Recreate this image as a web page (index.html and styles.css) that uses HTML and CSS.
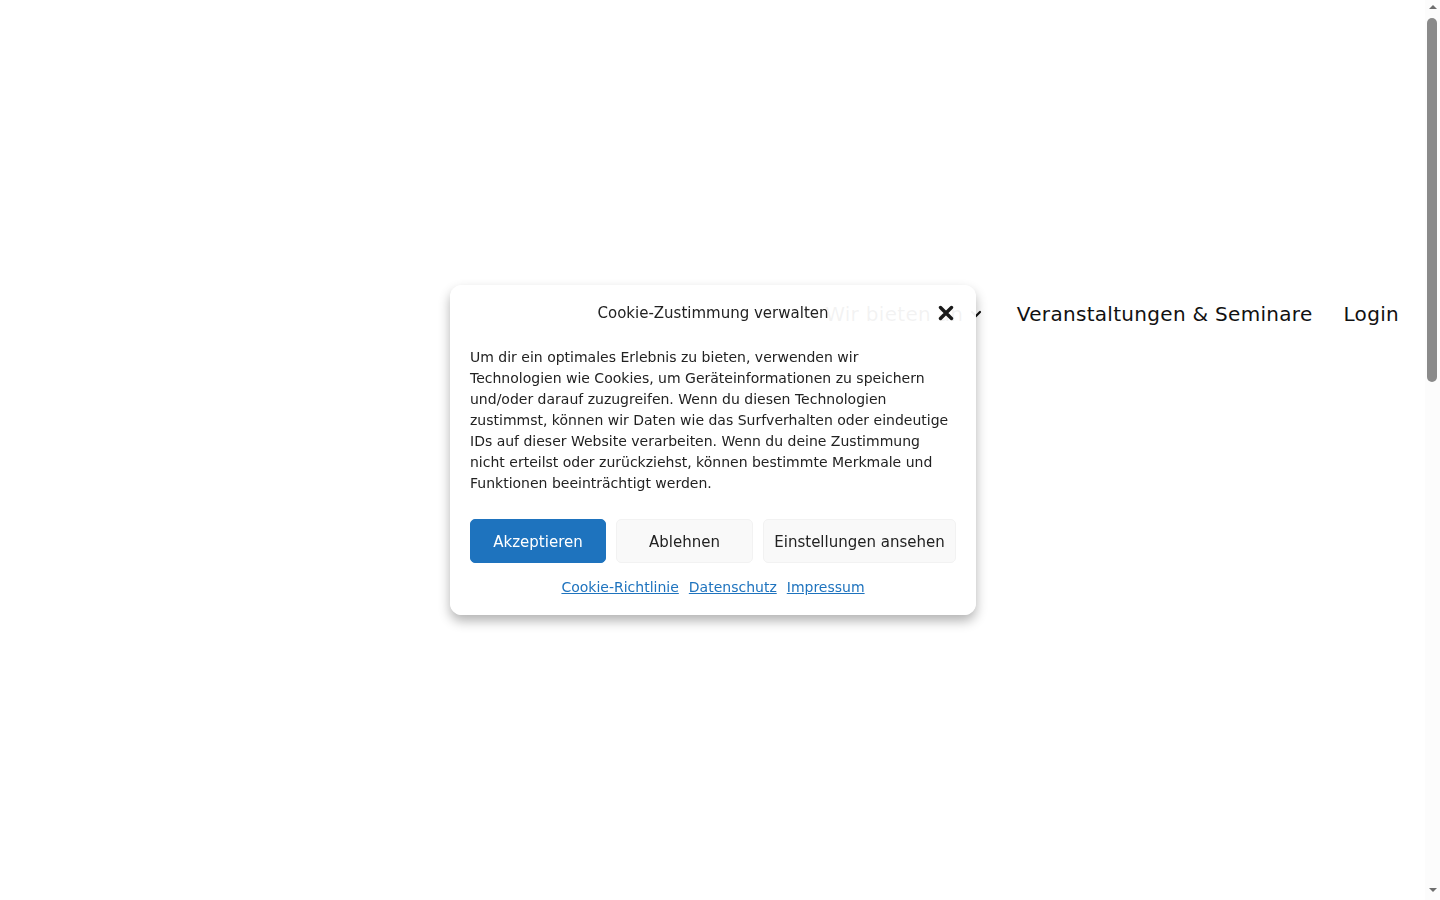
FILE: index.html
```html
<!DOCTYPE html>
<html lang="de">
<head>
    <meta charset="UTF-8">
    <meta name="viewport" content="width=device-width, initial-scale=1.0">
    <title>Cookie-Zustimmung</title>
    <link rel="stylesheet" href="styles.css">
</head>
<body>
    <div class="page">
        <!-- Site header behind the consent dialog -->
        <header class="site-header">
            <nav class="main-nav">
                <a class="nav-item nav-dropdown" href="#">Wir bieten an
                    <svg class="chevron" width="12" height="8" viewBox="0 0 12 8">
                        <path d="M2 2 L6 6 L10 2" fill="none" stroke="#111" stroke-width="2.2" stroke-linecap="round"/>
                    </svg>
                </a>
                <a class="nav-item" href="#">Veranstaltungen &amp; Seminare</a>
                <a class="nav-item" href="#">Login</a>
            </nav>
        </header>
    </div>

    <!-- Window scrollbar -->
    <div class="scrollbar">
        <div class="sb-arrow sb-up"></div>
        <div class="sb-track">
            <div class="sb-thumb"></div>
        </div>
        <div class="sb-arrow sb-down"></div>
    </div>

    <!-- Cookie consent dialog -->
    <div class="cookie-banner">
        <div class="cookie-header">
            <div class="cookie-title">Cookie-Zustimmung verwalten</div>
            <button class="cookie-close" aria-label="Schließen">
                <svg width="16" height="16" viewBox="0 0 16 16">
                    <path d="M2.5 2.5 L13.5 13.5 M13.5 2.5 L2.5 13.5" stroke="#1a1a1a" stroke-width="3.4" stroke-linecap="round"/>
                </svg>
            </button>
        </div>
        <div class="cookie-message">
            Um dir ein optimales Erlebnis zu bieten, verwenden wir Technologien wie Cookies, um Geräteinformationen zu speichern und/oder darauf zuzugreifen. Wenn du diesen Technologien zustimmst, können wir Daten wie das Surfverhalten oder eindeutige IDs auf dieser Website verarbeiten. Wenn du deine Zustimmung nicht erteilst oder zurückziehst, können bestimmte Merkmale und Funktionen beeinträchtigt werden.
        </div>
        <div class="cookie-buttons">
            <button class="btn btn-accept">Akzeptieren</button>
            <button class="btn btn-deny">Ablehnen</button>
            <button class="btn btn-settings">Einstellungen ansehen</button>
        </div>
        <div class="cookie-links">
            <a href="#">Cookie-Richtlinie</a>
            <a href="#">Datenschutz</a>
            <a href="#">Impressum</a>
        </div>
    </div>
</body>
</html>
```

FILE: styles.css
```css
body {
    margin: 0;
    height: 100vh;
    display: flex;
    font-family: "DejaVu Sans", sans-serif;
    background-color: #fff;
    color: #222;
    overflow: hidden;
}
.page {
    flex: 1;
    overflow: hidden;
}
.scrollbar {
    width: 15px;
    display: flex;
    flex-direction: column;
    background-color: #fcfcfc;
}
.sb-arrow {
    height: 15px;
    display: flex;
    justify-content: center;
}
.sb-up {
    align-items: flex-start;
    padding-top: 5px;
    box-sizing: border-box;
}
.sb-up::before {
    content: "";
    border-left: 4px solid transparent;
    border-right: 4px solid transparent;
    border-bottom: 4px solid #6e6e6e;
}
.sb-down {
    align-items: flex-start;
    padding-top: 3px;
    box-sizing: border-box;
}
.sb-down::before {
    content: "";
    border-left: 4px solid transparent;
    border-right: 4px solid transparent;
    border-top: 4px solid #6e6e6e;
}
.sb-track {
    flex: 1;
    padding: 3px 3px 0 2px;
}
.sb-thumb {
    height: 364px;
    background-color: #8a8a8a;
    border-radius: 5px;
}
.site-header {
    height: 628px;
    display: flex;
    justify-content: flex-end;
    padding: 0 26px 0 0;
}
.main-nav {
    display: flex;
    align-items: center;
    gap: 32px;
    height: 628px;
}
.nav-item {
    font-size: 20px;
    letter-spacing: 0.3px;
    color: #111;
    text-decoration: none;
}
.nav-dropdown {
    margin-right: 3px;
}
.nav-item:last-child {
    margin-left: -1px;
}
.chevron {
    vertical-align: 3px;
}
.cookie-banner {
    position: fixed;
    top: 285px;
    left: 450px;
    width: 526px;
    box-sizing: border-box;
    padding: 16px 20px 17px;
    background-color: rgba(255, 255, 255, 0.95);
    border-radius: 12px;
    box-shadow: 0 6px 12px rgba(0, 0, 0, 0.3);
}
.cookie-header {
    position: relative;
    height: 24px;
    display: flex;
    align-items: center;
    justify-content: center;
}
.cookie-title {
    font-size: 15px;
    color: #222;
}
.cookie-close {
    position: absolute;
    right: 2px;
    top: 4px;
    padding: 0;
    border: none;
    background: none;
    cursor: pointer;
}
.cookie-message {
    margin-top: 22px;
    width: 479px;
    font-size: 14px;
    line-height: 21px;
    color: #222;
}
.cookie-buttons {
    margin-top: 25px;
    display: flex;
    gap: 10px;
}
.btn {
    height: 44px;
    font-family: "DejaVu Sans", sans-serif;
    font-size: 15px;
    border-radius: 5px;
    cursor: pointer;
    padding: 2px 0 0;
    white-space: nowrap;
}
.btn-accept {
    width: 136px;
    background-color: #1e73be;
    border: 1px solid #1e73be;
    color: #fff;
}
.btn-deny {
    width: 137px;
    background-color: #f9f9f9;
    border: 1px solid #f2f2f2;
    color: #222;
}
.btn-settings {
    width: 193px;
    background-color: #f9f9f9;
    border: 1px solid #f2f2f2;
    color: #222;
}
.cookie-links {
    margin-top: 14px;
    display: flex;
    justify-content: center;
    gap: 10px;
    font-size: 14px;
    line-height: 21px;
}
.cookie-links a {
    color: #1e73be;
}
```
